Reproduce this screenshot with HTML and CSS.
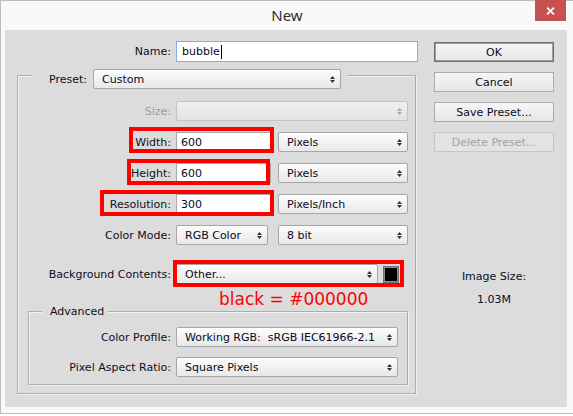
FILE: index.html
```html
<!DOCTYPE html>
<html lang="en">
<head>
<meta charset="utf-8">
<title>New</title>
<link rel="stylesheet" href="styles.css">
</head>
<body>
<div class="window">
  <header class="titlebar">
    <div class="title">New</div>
    <div class="close">
      <svg width="9" height="8" viewBox="0 0 9 8"><path d="M1 .6L8 7.4M8 .6L1 7.4" stroke="#fff" stroke-width="1.7" fill="none"/></svg>
    </div>
  </header>

  <div class="dialog">
    <div class="main">
      <div class="row name-row">
        <div class="lf">
          <span class="lbl">Name:</span>
          <div class="inp inp-name">bubble<span class="caret"></span></div>
        </div>
      </div>

      <div class="fs preset-fs">
        <div class="legend preset-legend">
          <span class="lbl">Preset:</span>
          <div class="sel w-preset"><span class="val">Custom</span><svg class="arr" width="5" height="7" viewBox="0 0 5 7"><path d="M0 3H5L2.5 0ZM0 4H5L2.5 7Z"/></svg></div>
        </div>

        <div class="rows">
          <div class="row">
            <div class="lf">
              <span class="lbl dis">Size:</span>
              <div class="sel sel-dis w-size"><span class="val"></span><svg class="arr" width="5" height="7" viewBox="0 0 5 7"><path d="M0 3H5L2.5 0ZM0 4H5L2.5 7Z"/></svg></div>
            </div>
          </div>

          <div class="row">
            <div class="lf">
              <div class="mark m-width">
                <span class="lbl">Width:</span>
                <div class="inp w-num">600</div>
              </div>
            </div>
            <div class="sel w-unit"><span class="val">Pixels</span><svg class="arr" width="5" height="7" viewBox="0 0 5 7"><path d="M0 3H5L2.5 0ZM0 4H5L2.5 7Z"/></svg></div>
          </div>

          <div class="row">
            <div class="lf">
              <div class="mark m-height">
                <span class="lbl">Height:</span>
                <div class="inp w-num">600</div>
              </div>
            </div>
            <div class="sel w-unit"><span class="val">Pixels</span><svg class="arr" width="5" height="7" viewBox="0 0 5 7"><path d="M0 3H5L2.5 0ZM0 4H5L2.5 7Z"/></svg></div>
          </div>

          <div class="row">
            <div class="lf">
              <div class="mark m-res">
                <span class="lbl">Resolution:</span>
                <div class="inp w-num">300</div>
              </div>
            </div>
            <div class="sel w-unit"><span class="val">Pixels/Inch</span><svg class="arr" width="5" height="7" viewBox="0 0 5 7"><path d="M0 3H5L2.5 0ZM0 4H5L2.5 7Z"/></svg></div>
          </div>

          <div class="row row-cm">
            <div class="lf">
              <span class="lbl">Color Mode:</span>
              <div class="sel w-mode"><span class="val">RGB Color</span><svg class="arr" width="5" height="7" viewBox="0 0 5 7"><path d="M0 3H5L2.5 0ZM0 4H5L2.5 7Z"/></svg></div>
            </div>
            <div class="sel w-unit"><span class="val">8 bit</span><svg class="arr" width="5" height="7" viewBox="0 0 5 7"><path d="M0 3H5L2.5 0ZM0 4H5L2.5 7Z"/></svg></div>
          </div>
        </div>

        <div class="row row-bg">
          <div class="lf">
            <span class="lbl">Background Contents:</span>
            <div class="mark m-bg">
              <div class="sel w-bg"><span class="val">Other...</span><svg class="arr" width="5" height="7" viewBox="0 0 5 7"><path d="M0 3H5L2.5 0ZM0 4H5L2.5 7Z"/></svg></div>
              <div class="swatch"></div>
            </div>
          </div>
        </div>

        <div class="note">black = #000000</div>

        <div class="fs adv-fs">
          <div class="legend adv-legend">Advanced</div>
          <div class="adv-rows">
            <div class="row">
              <div class="lf">
                <span class="lbl">Color Profile:</span>
                <div class="sel w-adv"><span class="val">Working RGB:&nbsp; sRGB IEC61966-2.1</span><svg class="arr" width="5" height="7" viewBox="0 0 5 7"><path d="M0 3H5L2.5 0ZM0 4H5L2.5 7Z"/></svg></div>
              </div>
            </div>
            <div class="row">
              <div class="lf">
                <span class="lbl">Pixel Aspect Ratio:</span>
                <div class="sel w-adv"><span class="val">Square Pixels</span><svg class="arr" width="5" height="7" viewBox="0 0 5 7"><path d="M0 3H5L2.5 0ZM0 4H5L2.5 7Z"/></svg></div>
              </div>
            </div>
          </div>
        </div>
      </div>
    </div>

    <div class="side">
      <div class="btn btn-ok">OK</div>
      <div class="btn">Cancel</div>
      <div class="btn">Save Preset...</div>
      <div class="btn btn-dis">Delete Preset...</div>
      <div class="imgsize">Image Size:</div>
      <div class="imgval">1.03M</div>
    </div>
  </div>
</div>
</body>
</html>
```

FILE: styles.css
```css
* { box-sizing: border-box; }

html, body {
  margin: 0;
  padding: 0;
  background: #ffffff;
}

body {
  font-family: "DejaVu Sans", Verdana, sans-serif;
  font-size: 11px;
  color: #0e0e26;
}

.window {
  width: 573px;
  height: 414px;
  background: #f9f9f9;
  border: 1px solid #bcbcbc;
  border-right: none;
}

/* Title bar */
.titlebar {
  height: 29px;
  display: grid;
  grid-template-columns: 1fr auto 1fr;
  align-items: start;
}

.title {
  grid-column: 2;
  font-family: "Noto Sans", "Open Sans", sans-serif;
  font-size: 15px;
  line-height: 29px;
  color: #2e2e2e;
}

.close {
  grid-column: 3;
  justify-self: end;
  width: 31px;
  height: 21px;
  margin-top: -1px;
  margin-right: 7px;
  background: #c75050;
  display: flex;
  align-items: center;
  justify-content: center;
}

.close svg { display: block; }

/* Dialog body */
.dialog {
  margin: 0 6px 0 4px;
  height: 377px;
  background: #dcdcdc;
  display: flex;
  padding: 11px 13px 0 12px;
}

.main { width: 401px; }

.side {
  width: 120px;
  margin-left: 16px;
  display: flex;
  flex-direction: column;
}

/* Rows */
.row {
  display: flex;
  align-items: center;
  height: 20px;
  gap: 7px;
}

.row-cm { gap: 10px; }

.name-row { height: 21px; }

.lf {
  flex: 1;
  min-width: 0;
  display: flex;
  justify-content: flex-end;
  align-items: center;
  gap: 5px;
}

.lbl { white-space: nowrap; }
.lbl.dis { color: #9c9c9c; }

/* Inputs */
.inp {
  height: 20px;
  background: #ffffff;
  border: 1px solid #a9a9a9;
  padding-left: 4px;
  display: flex;
  align-items: center;
  white-space: nowrap;
  color: #0a0a1e;
}

.inp-name {
  width: 242px;
  height: 21px;
  border-color: #86afe0;
  padding-left: 5px;
}

.caret {
  display: inline-block;
  width: 1px;
  height: 14px;
  background: #000;
  margin-left: 1px;
}

.w-num { width: 95px; }

/* Selects */
.sel {
  height: 20px;
  border: 1px solid #a6a6a6;
  border-radius: 2px;
  background: linear-gradient(#fdfdfd, #e8e8e8);
  padding: 0 5px 0 8px;
  display: flex;
  align-items: center;
  white-space: nowrap;
  color: #0a0a1e;
}

.sel .val {
  flex: 1;
  overflow: hidden;
}

.arr {
  flex: none;
  display: block;
  fill: #333333;
}

.sel-dis {
  border-color: #c4c4c4;
  background: linear-gradient(#efefef, #e4e4e4);
}

.sel-dis .arr { fill: #ababab; }

.w-preset { width: 248px; }
.w-size { width: 232px; }
.w-unit { width: 130px; }
.w-mode { width: 92px; }
.w-bg { width: 202px; }
.w-adv { width: 222px; }

.swatch {
  width: 16px;
  height: 17px;
  background: #000;
  border: 1px solid #707070;
  box-shadow: inset 0 0 0 1px #8e8e8e;
}

/* Red annotation boxes */
.mark {
  position: relative;
  display: flex;
  align-items: center;
  gap: 5px;
}

.mark::after {
  content: "";
  position: absolute;
  border: 4px solid #ff0000;
  pointer-events: none;
}

.m-width::after { top: -5px; bottom: -1px; left: -6px; right: -3px; }
.m-height::after { top: -4px; bottom: -2px; left: -4px; right: 1px; }
.m-res::after { top: -4px; bottom: -2px; left: -10px; right: -3px; }
.m-bg::after { top: -4px; bottom: -3px; left: -3px; right: -5px; }

/* Fieldsets */
.fs {
  border: 1px solid #adadad;
  box-shadow: inset 1px 1px 0 #f2f2f2, 1px 1px 0 #f2f2f2;
}

.legend {
  width: max-content;
  background: #dcdcdc;
}

.preset-fs {
  margin-top: 13px;
  width: 399px;
  padding: 0 7px 8px 0;
}

.preset-legend {
  display: flex;
  align-items: center;
  gap: 6px;
  height: 20px;
  margin: -7px 0 0 14px;
  padding: 0 7px 0 17px;
}

.rows {
  margin-top: 12px;
  display: flex;
  flex-direction: column;
  gap: 11px;
}

.row-bg {
  margin-top: 19px;
  padding-right: 9px;
}

.note {
  margin-top: 5px;
  padding-left: 201px;
  font-size: 17px;
  line-height: 20px;
  color: #ff0000;
}

.adv-fs {
  margin: 2px 0 0 10px;
  padding: 0 9px 7px 0;
}

.adv-legend {
  margin: -7px 0 0 13px;
  padding: 0 4px 0 8px;
  line-height: 13px;
}

.adv-rows {
  margin-top: 9px;
  display: flex;
  flex-direction: column;
  gap: 10px;
}

/* Buttons */
.btn {
  width: 120px;
  height: 20px;
  border: 1px solid #acacac;
  background: linear-gradient(#f6f6f6, #e6e6e6);
  display: flex;
  align-items: center;
  justify-content: center;
  color: #0a0a1e;
  white-space: nowrap;
}

.btn + .btn { margin-top: 10px; }

.btn-ok {
  margin-top: 1px;
  border-color: #6e6e6e;
  box-shadow: inset 0 0 0 1px #9c9c9c;
}

.btn-dis {
  color: #a2a2a2;
  border-color: #c6c6c6;
  background: #e3e3e3;
}

.imgsize {
  margin-top: 118px;
  text-align: center;
  line-height: 14px;
}

.imgval {
  margin-top: 9px;
  text-align: center;
  line-height: 14px;
}
```
